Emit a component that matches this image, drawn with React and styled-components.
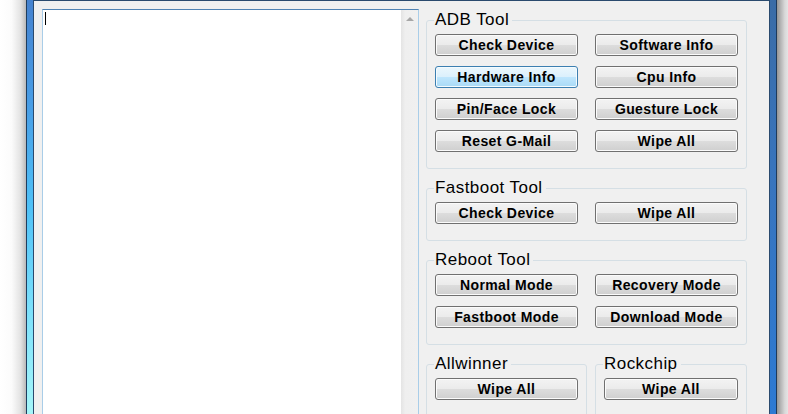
import React from "react";
import styled, { createGlobalStyle, css } from "styled-components";

const Global = createGlobalStyle`
  html, body { margin: 0; padding: 0; background: #ffffff; }
  body { font-family: "Liberation Sans", Arial, sans-serif; }
`;

const Page = styled.div`
  width: 788px;
  height: 414px;
  display: flex;
  overflow: hidden;
  background: #ffffff;
`;

const Shadow = styled.div`
  width: 26px;
  flex: none;
  background: ${(p) =>
    p.$side === "left"
      ? "linear-gradient(to right, #ffffff 0%, #fbfbfb 45%, #e2e2e2 80%, #b9b9b9 100%)"
      : "linear-gradient(to left, #ffffff 0%, #fbfbfb 35%, #d8d8d8 70%, #959595 100%)"};
`;

const FrameEdge = styled.div`
  width: 6px;
  flex: none;
  ${(p) =>
    p.$side === "left"
      ? css`
          border-left: 1px solid #1e3d5e;
          background: linear-gradient(to bottom, #4582cf 0%, #489de6 25%, #4fc1f7 50%, #7ce0fb 75%, #a6f6f9 100%);
        `
      : css`
          border-right: 1px solid #1e3a5a;
          background: linear-gradient(to bottom, #3a6ca6 0%, #3874bc 40%, #2d7ad3 100%);
        `}
`;

const Client = styled.div`
  width: 720px;
  flex: none;
  border: 1px solid #2a4a6e;
  border-bottom: none;
  background: #f0f0f0;
  padding: 8px 7px 0 8px;
  display: flex;
  align-items: flex-start;
  gap: 7px;
`;

const TextBox = styled.div`
  width: 377px;
  height: 420px;
  flex: none;
  box-sizing: border-box;
  background: #ffffff;
  border: 1px solid #a9cde8;
  border-top-color: #4f82b3;
  display: flex;
  justify-content: space-between;
`;

const Caret = styled.div`
  width: 1px;
  height: 13px;
  margin: 2px 0 0 2px;
  background: #000000;
`;

const ScrollBar = styled.div`
  width: 17px;
  flex: none;
  background: linear-gradient(to right, #e4e4e4 0%, #efefef 25%, #f0f0f0 100%);
  display: flex;
  justify-content: center;
`;

const ArrowUp = styled.div`
  margin-top: 7px;
  width: 0;
  height: 0;
  border-left: 4px solid transparent;
  border-right: 4px solid transparent;
  border-bottom: 4px solid #a7a7a7;
`;

const Column = styled.div`
  width: 321px;
  flex: none;
  margin-top: 3px;
  display: flex;
  flex-direction: column;
  gap: 11px;
`;

const Row = styled.div`
  display: flex;
  gap: 8px;
`;

const Group = styled.fieldset`
  margin: 0;
  min-inline-size: 0;
  box-sizing: border-box;
  width: ${(p) => p.$w || 321}px;
  border: 1px solid #d5dfe5;
  border-radius: 3px;
  padding: 6px 8px ${(p) => p.$pb || 16}px;
  flex: none;
`;

const Title = styled.legend`
  font-family: "Liberation Sans", Arial, sans-serif;
  font-size: 17px;
  line-height: 16px;
  letter-spacing: 0.45px;
  color: #000000;
  padding: 0 3px 0 1px;
  margin-left: -1px;
`;

const Grid = styled.div`
  display: grid;
  grid-template-columns: ${(p) => (p.$single ? "1fr" : "143px 143px")};
  column-gap: 17px;
  row-gap: 10px;
`;

const Button = styled.button`
  height: 22px;
  box-sizing: border-box;
  width: 100%;
  margin: 0;
  padding: 0;
  font-family: "Liberation Sans", Arial, sans-serif;
  font-weight: bold;
  font-size: 14px;
  letter-spacing: 0.4px;
  color: #000000;
  border-radius: 3px;
  border: 1px solid ${(p) => (p.$hot ? "#3c7fb1" : "#707070")};
  box-shadow: inset 0 0 0 1px ${(p) => (p.$hot ? "#f4fbfe" : "#fbfbfb")};
  background: ${(p) =>
    p.$hot
      ? "linear-gradient(to bottom, #ebf7fd 0%, #dbf0fc 50%, #bfe6fd 50%, #a9daf6 100%)"
      : "linear-gradient(to bottom, #f3f3f3 0%, #ebebeb 50%, #dddddd 50%, #cfcfcf 100%)"};
  line-height: 20px;
  cursor: default;
`;

const adb = [
  ["Check Device", false],
  ["Software Info", false],
  ["Hardware Info", true],
  ["Cpu Info", false],
  ["Pin/Face Lock", false],
  ["Guesture Lock", false],
  ["Reset G-Mail", false],
  ["Wipe All", false],
];

export default function App() {
  return (
    <>
      <Global />
      <Page>
        <Shadow $side="left" />
        <FrameEdge $side="left" />
        <Client>
          <TextBox>
            <Caret />
            <ScrollBar>
              <ArrowUp />
            </ScrollBar>
          </TextBox>
          <Column>
            <Group>
              <Title>ADB Tool</Title>
              <Grid>
                {adb.map(([t, hot]) => (
                  <Button key={t} $hot={hot}>
                    {t}
                  </Button>
                ))}
              </Grid>
            </Group>
            <Group>
              <Title>Fastboot Tool</Title>
              <Grid>
                <Button>Check Device</Button>
                <Button>Wipe All</Button>
              </Grid>
            </Group>
            <Group>
              <Title>Reboot Tool</Title>
              <Grid>
                <Button>Normal Mode</Button>
                <Button>Recovery Mode</Button>
                <Button>Fastboot Mode</Button>
                <Button>Download Mode</Button>
              </Grid>
            </Group>
            <Row>
              <Group $w={161}>
                <Title>Allwinner</Title>
                <Grid $single>
                  <Button>Wipe All</Button>
                </Grid>
              </Group>
              <Group $w={152}>
                <Title>Rockchip</Title>
                <Grid $single>
                  <Button>Wipe All</Button>
                </Grid>
              </Group>
            </Row>
          </Column>
        </Client>
        <FrameEdge $side="right" />
        <Shadow $side="right" />
      </Page>
    </>
  );
}
